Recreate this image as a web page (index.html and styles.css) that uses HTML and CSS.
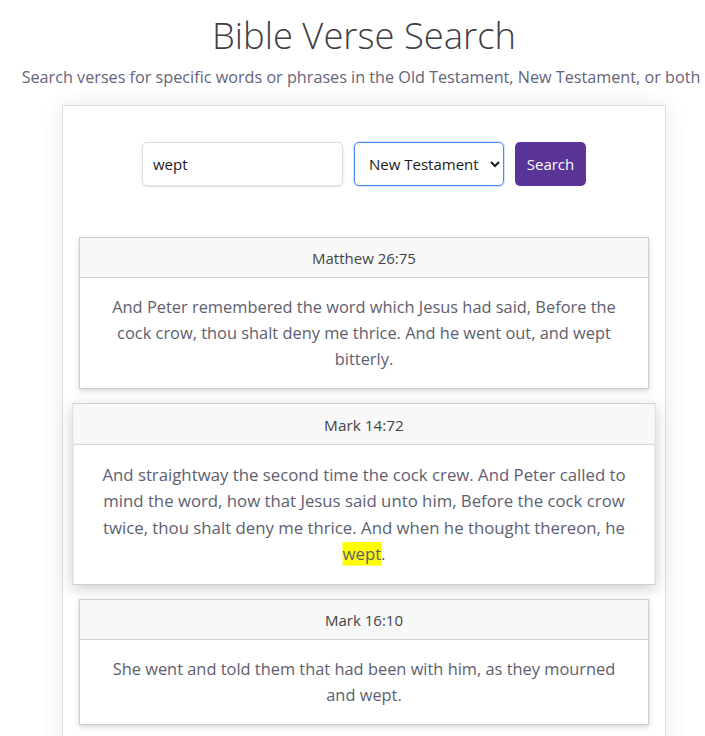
FILE: index.html
```html
<!DOCTYPE html>
<html lang="en">
<head>
<meta charset="utf-8">
<title>Bible Verse Search</title>
<link rel="stylesheet" href="styles.css">
</head>
<body>
<div class="page">
<header class="page-head">
  <h1 class="title">Bible Verse Search</h1>
  <p class="subtitle">Search verses for specific words or phrases in the Old Testament, New Testament, or both</p>
</header>
<main class="panel">
  <form class="search-form">
    <input class="search-input" type="text" value="wept">
    <select class="search-select">
      <option>Old Testament</option>
      <option selected>New Testament</option>
      <option>Both</option>
    </select>
    <button class="search-btn" type="button">Search</button>
  </form>
  <section class="results">
    <article class="card">
      <div class="card-head">Matthew 26:75</div>
      <div class="card-body">And Peter remembered the word which Jesus had said, Before the cock crow, thou shalt deny me thrice. And he went out, and wept bitterly.</div>
    </article>
    <article class="card card-hover">
      <div class="card-head">Mark 14:72</div>
      <div class="card-body">And straightway the second time the cock crew. And Peter called to mind the word, how that Jesus said unto him, Before the cock crow twice, thou shalt deny me thrice. And when he thought thereon, he <mark class="hl">wept</mark>.</div>
    </article>
    <article class="card">
      <div class="card-head">Mark 16:10</div>
      <div class="card-body">She went and told them that had been with him, as they mourned and wept.</div>
    </article>
  </section>
</main>
</div>
</body>
</html>
```
FILE: styles.css
```css
html, body {
  margin: 0;
  padding: 0;
  background: #fff;
}
body {
  font-family: "Open Sans", "Noto Sans", sans-serif;
  color: #5e5e70;
  overflow: hidden;
  height: 736px;
}
.page {
  width: 728px;
}
.page-head {
  text-align: center;
  padding-top: 12px;
}
.title {
  margin: 0;
  font-size: 36.4px;
  font-weight: 300;
  line-height: 46px;
  color: #3f3f46;
}
.subtitle {
  margin: 8px 0 0;
  padding-right: 6px;
  font-size: 16.2px;
  line-height: 22px;
  color: #64647a;
  white-space: nowrap;
}
.panel {
  box-sizing: border-box;
  width: 604px;
  margin: 17px auto 0;
  border: 1px solid #dcdcdc;
  background: #fff;
  box-shadow: 0 0 22px rgba(0, 0, 0, 0.09);
  padding: 36px 16px 40px;
  min-height: 700px;
}
.search-form {
  display: flex;
  justify-content: center;
  gap: 11px;
}
.search-input {
  box-sizing: border-box;
  width: 201px;
  height: 44px;
  border: 1px solid #dedede;
  border-radius: 5px;
  box-shadow: 0 1px 3px rgba(0, 0, 0, 0.12);
  padding: 0 10px;
  font-family: inherit;
  font-size: 15px;
  color: #1a1a1a;
  outline: none;
}
.search-select {
  box-sizing: border-box;
  width: 150px;
  height: 44px;
  border: 1px solid #4a8cf7;
  border-radius: 5px;
  box-shadow: 0 0 0 1px rgba(74, 140, 247, 0.25);
  padding: 0 8px 0 10px;
  font-family: inherit;
  font-size: 15px;
  color: #1a1a1a;
  background: #fff;
  outline: none;
}
.search-btn {
  box-sizing: border-box;
  width: 71px;
  height: 44px;
  border: none;
  border-radius: 5px;
  background: #5a3496;
  color: #fff;
  font-family: inherit;
  font-size: 15px;
  padding: 0;
}
.results {
  margin-top: 51px;
  display: flex;
  flex-direction: column;
  gap: 16px;
}
.card {
  border: 1px solid #cfcfcf;
  background: #fff;
  box-shadow: 0 2px 5px rgba(0, 0, 0, 0.18);
}
.card-hover {
  transform: scale(1.023);
  box-shadow: 0 4px 14px rgba(0, 0, 0, 0.2);
}
.card-head {
  height: 39px;
  line-height: 40px;
  text-align: center;
  background: #f8f8f8;
  border-bottom: 1px solid #d2d2d2;
  font-size: 15px;
  color: #444;
}
.card-body {
  padding: 16px 24px 16px;
  text-align: center;
  font-size: 16.4px;
  line-height: 26px;
}
.hl {
  background: #ffff00;
  color: inherit;
  padding: 0;
}
```
